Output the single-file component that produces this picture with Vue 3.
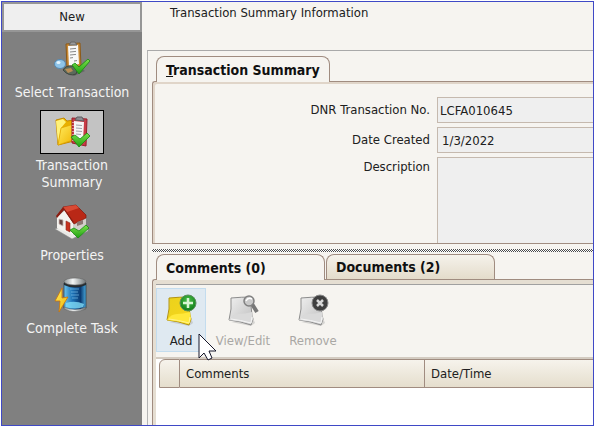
<script setup>
import { ref } from 'vue';

const tasks = [
  { id: 'select', label: 'Select Transaction' },
  { id: 'summary', label: 'Transaction Summary' },
  { id: 'properties', label: 'Properties' },
  { id: 'complete', label: 'Complete Task' },
];
const activeTask = ref('summary');

const tabs = [
  { id: 'comments', label: 'Comments', count: 0 },
  { id: 'documents', label: 'Documents', count: 2 },
];
const activeTab = ref('comments');

const actions = [
  { id: 'add', label: 'Add', enabled: true },
  { id: 'edit', label: 'View/Edit', enabled: false },
  { id: 'remove', label: 'Remove', enabled: false },
];

const transactionNo = ref('LCFA010645');
const dateCreated = ref('1/3/2022');
const description = ref('');
</script>

<template>
  <div class="window">
    <svg class="defs" width="0" height="0" aria-hidden="true">
      <defs>
        <linearGradient id="gold" x1="0" y1="0" x2="1" y2="1">
          <stop offset="0" stop-color="#ffed62" />
          <stop offset="1" stop-color="#f0b400" />
        </linearGradient>
        <linearGradient id="note" x1="0" y1="0" x2="1" y2="1">
          <stop offset="0" stop-color="#ead21c" />
          <stop offset="1" stop-color="#f8d61c" />
        </linearGradient>
        <linearGradient id="silver" x1="0" y1="0" x2="1" y2="1">
          <stop offset="0" stop-color="#f0f0f0" />
          <stop offset="1" stop-color="#bdbdbd" />
        </linearGradient>
        <linearGradient id="green" x1="0" y1="0" x2="0" y2="1">
          <stop offset="0" stop-color="#7be04a" />
          <stop offset="1" stop-color="#1ea012" />
        </linearGradient>
        <linearGradient id="tank" x1="0" y1="0" x2="1" y2="0">
          <stop offset="0" stop-color="#6cc4ee" />
          <stop offset="0.4" stop-color="#1a6fb4" />
          <stop offset="0.75" stop-color="#0a3a72" />
          <stop offset="1" stop-color="#49a9dc" />
        </linearGradient>
        <linearGradient id="metal" x1="0" y1="0" x2="1" y2="0">
          <stop offset="0" stop-color="#8c9294" />
          <stop offset="0.4" stop-color="#f4f6f6" />
          <stop offset="1" stop-color="#6d7375" />
        </linearGradient>
        <radialGradient id="greenBall" cx="0.5" cy="0.35" r="0.6">
          <stop offset="0" stop-color="#4cc04a" />
          <stop offset="1" stop-color="#12801c" />
        </radialGradient>
      </defs>
    </svg>

    <nav class="sidebar">
      <button type="button" class="group">New</button>
      <button
        v-for="task in tasks"
        :key="task.id"
        type="button"
        class="task"
        :class="{ active: task.id === activeTask }"
        @click="activeTask = task.id"
      >
        <span class="task-icon">
          <svg v-if="task.id === 'select'" width="36" height="38" viewBox="0 0 36 38">
            <path d="M10 30l10 6 11-5-8-6z" fill="#555" opacity="0.6" />
            <path d="M12 4l14-1 1 23-14 2z" fill="#c98a35" stroke="#8c5a1a" />
            <path d="M14 6l10-1 1 19-10 2z" fill="#f8f8f8" />
            <path d="M16 9l6-.6M16 12l6-.6M16 15l6-.6M16 18l3-.4M20 21l3-.4" stroke="#888" fill="none" />
            <path d="M15 5l2-3h4l2 3z" fill="#9a9a9a" stroke="#666" />
            <path d="M9 30q3-5 9-4l6 2-2 6q-7 3-13-4z" fill="#5b6a5b" stroke="#404640" />
            <path d="M11 29l6-1 2 3-5 2z" fill="#b98d56" />
            <ellipse cx="6" cy="24" rx="5.5" ry="4.5" fill="#8fc4e8" stroke="#5688b0" />
            <ellipse cx="4.500" cy="22.500" rx="2" ry="1.500" fill="#e2f3fd" />
            <path d="M18 25l3-2 4 4 9-8 2 2-11 13z" fill="url(#green)" stroke="#178c10" stroke-width="0.8" />
          </svg>
          <svg v-else-if="task.id === 'summary'" width="36" height="36" viewBox="0 0 36 36">
            <path d="M2 6l8-2 3 3 7-1v21L4 31z" fill="#e8b000" stroke="#c48a00" />
            <path d="M2 7l7-2 3 3-5 6-3 15z" fill="#fff27a" />
            <path d="M7 14l13-4-1 16L4 31z" fill="url(#gold)" stroke="#e0a400" stroke-width="0.7" />
            <path d="M18 4l15 1-1 27-14-3z" fill="#c93b46" stroke="#96202c" />
            <path d="M20 7l10 1-1 20-9-1z" fill="#f5f5f5" />
            <path d="M22 11l6 .5M22 14l6 .5M22 17l6 .5M22 20l5 .5" stroke="#a0a0a8" fill="none" />
            <path d="M19 8v20" stroke="#fff" stroke-dasharray="1 2" />
            <path d="M21 6l2-3h5l2 4z" fill="#8d8d92" stroke="#5d5d62" />
            <path d="M17 23l4-2 5 4 7-6 3 3-11 11z" fill="url(#green)" stroke="#178c10" stroke-width="0.8" />
          </svg>
          <svg v-else-if="task.id === 'properties'" width="36" height="36" viewBox="0 0 36 36">
            <path d="M1 25l5-2 14 7 14-7v4l-16 8z" fill="#e9e9e6" stroke="#888" stroke-width="0.6" />
            <path d="M3 13l8-7 8 11v14L3 24z" fill="#f4f2ee" />
            <path d="M19 17l13-4v11l-13 7z" fill="#d3cfca" />
            <path d="M9 3l13-2 10 10v3l-12 6z" fill="#b92816" stroke="#7e160c" stroke-width="0.7" />
            <path d="M9 3l13-2 3 3-12 4z" fill="#d94a34" />
            <path d="M9 3L2 12l1 2 7-8 9 13 1-1z" fill="#8c1c10" />
            <path d="M5 15l4 1v6l-4-2z" fill="#6b4440" stroke="#c8bdb7" stroke-width="0.8" />
            <path d="M12 17l4 2v9l-4-2z" fill="#c8321e" stroke="#8f2a1e" stroke-width="0.6" />
            <path d="M23 18l6-2v4l-6 2z" fill="#8f7773" />
            <path d="M16 26l4-2 5 3 7-6 3 3-11 10z" fill="url(#green)" stroke="#178c10" stroke-width="0.8" />
          </svg>
          <svg v-else width="36" height="36" viewBox="0 0 36 36">
            <path d="M10 6v25q11 5 22 0V6z" fill="url(#tank)" stroke="#223746" stroke-width="0.7" />
            <path d="M16 12h9M17 15h7M17 18h8M18 21h6" stroke="#8ccdf0" opacity="0.6" fill="none" />
            <path d="M12 26q9-3 18 1l-1 3q-8 3-17 0z" fill="#7fdcf8" opacity="0.8" />
            <path d="M10 30q11 5 22 0v2q-11 5-22 0z" fill="url(#metal)" stroke="#555" stroke-width="0.4" />
            <path d="M10 5v3q11 5 22 0V5z" fill="#272d31" />
            <ellipse cx="21" cy="4.500" rx="11" ry="3.500" fill="url(#metal)" stroke="#666" stroke-width="0.6" />
            <path d="M8 11L1 24l5 0-1 11 9-15-6 1z" fill="url(#gold)" stroke="#c9730a" stroke-width="0.8" />
          </svg>
        </span>
        <span class="task-label">{{ task.label }}</span>
      </button>
    </nav>

    <main class="content">
      <header class="title">Transaction Summary Information</header>

      <div class="workspace">
        <section class="summary">
          <div class="tabs">
            <button type="button" class="tab selected"><u>T</u>ransaction Summary</button>
          </div>
          <form class="panel form" @submit.prevent>
            <label for="transaction-no">DNR Transaction No.</label>
            <input id="transaction-no" v-model="transactionNo" class="field flush" type="text" readonly />
            <label for="date-created">Date Created</label>
            <input id="date-created" v-model="dateCreated" class="field" type="text" readonly />
            <label for="description" class="top">Description</label>
            <textarea id="description" v-model="description" class="field area" readonly></textarea>
          </form>
        </section>

        <div class="splitter"></div>

        <section class="details">
          <div class="tabs">
            <button
              v-for="tab in tabs"
              :key="tab.id"
              type="button"
              class="tab wide"
              :class="{ selected: tab.id === activeTab }"
              @click="activeTab = tab.id"
            >
              {{ tab.label }} ({{ tab.count }})
            </button>
          </div>
          <div class="panel lower">
            <div class="toolbar">
              <button
                v-for="action in actions"
                :key="action.id"
                type="button"
                class="action"
                :class="action.id"
                :disabled="!action.enabled"
              >
                <svg width="32" height="34" viewBox="0 0 32 34">
                  <path d="M4 29l20 4 4-3-2-5z" fill="#999" opacity="0.35" />
                  <path
                    d="M4 5q10-1 21-1-2 9 0 18l1 4-2 6Q13 28 2 27q3-11 2-22z"
                    :fill="action.enabled ? 'url(#note)' : 'url(#silver)'"
                    :stroke="action.enabled ? '#b39412' : '#8c8c8c'"
                  />
                  <path
                    d="M2 27q4-6 10-6t13-2l1 7-2 5Q13 28 2 27z"
                    :fill="action.enabled ? '#ffe83a' : '#dadada'"
                  />
                  <path
                    d="M4 26q9 1 20 4l1-6"
                    fill="none"
                    :stroke="action.enabled ? '#fff38c' : '#f5f5f5'"
                  />
                  <g v-if="action.id === 'add'">
                    <circle cx="23" cy="10" r="8" fill="url(#greenBall)" stroke="#5c8f5c" />
                    <path d="M23 5v10M18 10h10" stroke="#d8f5d4" stroke-width="2.500" />
                  </g>
                  <g v-else-if="action.id === 'edit'">
                    <path d="M25 11l5 8" stroke="#777" stroke-width="4" />
                    <circle cx="22" cy="8" r="5" fill="#c9c9c9" stroke="#808080" stroke-width="1.500" />
                    <path d="M19 8q2-4 6-2" stroke="#fff" stroke-width="1.500" fill="none" />
                  </g>
                  <g v-else>
                    <circle cx="23" cy="10" r="8" fill="#3f3f3f" stroke="#8a8a8a" />
                    <path d="M20 7l6 6M26 7l-6 6" stroke="#d8d8d8" stroke-width="2.500" />
                  </g>
                </svg>
                <span>{{ action.label }}</span>
              </button>
              <svg class="pointer" width="20" height="28" viewBox="0 0 20 28" aria-hidden="true">
                <path d="M1 1v24l5-5 4 7 4-2-3-7h7z" fill="#fff" stroke="#16162a" />
              </svg>
            </div>
            <div class="grid">
              <table>
                <colgroup>
                  <col class="col-mark" />
                  <col class="col-comments" />
                  <col />
                </colgroup>
                <thead>
                  <tr>
                    <th scope="col"></th>
                    <th scope="col">Comments</th>
                    <th scope="col">Date/Time</th>
                  </tr>
                </thead>
              </table>
            </div>
          </div>
        </section>
      </div>
    </main>
  </div>
</template>

<style>
body {
  margin: 0;
  background: #fff;
}
</style>

<style scoped>
* {
  box-sizing: border-box;
}

.window {
  display: flex;
  min-height: calc(100vh - 1px);
  margin: 1px 0 0 1px;
  border: 1px solid #3f49c6;
  background: #f6f4f0;
  color: #202020;
  font-family: "DejaVu Sans Condensed", "DejaVu Sans", sans-serif;
  font-size: 13px;
  line-height: 16px;
}

.defs {
  position: absolute;
}

button,
input,
textarea {
  font: inherit;
  color: inherit;
}

button {
  margin: 0;
  padding: 0;
  border: 0;
  background: none;
}

.sidebar {
  display: flex;
  flex: none;
  flex-direction: column;
  align-items: center;
  width: 140px;
  background: #808080;
}

.group {
  align-self: stretch;
  height: 30px;
  margin-bottom: 5px;
  border: 2px solid #969696;
  background: #efefef;
}

.task {
  display: flex;
  flex-direction: column;
  align-items: center;
  margin-bottom: 9px;
  color: #f4f4f4;
  font-size: 14px;
  line-height: 17px;
}

.task-icon {
  display: flex;
  align-items: center;
  justify-content: center;
  width: 64px;
  height: 44px;
  margin-bottom: 3px;
  border: 1px solid transparent;
}

.task.active .task-icon {
  border-color: #000;
  background: #c3c3c3;
}

.task-label {
  max-width: 130px;
}

.task.active .task-label {
  max-width: 90px;
}

.content {
  display: flex;
  flex: 1;
  flex-direction: column;
  min-width: 0;
  padding-left: 5px;
}

.title {
  height: 48px;
  padding: 3px 0 0 23px;
}

.workspace {
  display: flex;
  flex: 1;
  flex-direction: column;
  padding: 5px 0 0 4px;
  border-top: 1px solid #a9a9a9;
  border-left: 1px solid #b4b4b4;
}

.tabs {
  display: flex;
  gap: 1px;
  align-items: flex-end;
  padding-left: 4px;
}

.tab {
  height: 25px;
  padding: 0 9px;
  border: 1px solid #a08c80;
  border-bottom: 0;
  border-radius: 8px 8px 0 0;
  background: linear-gradient(#f5f2eb, #e4dccb);
  color: #101010;
  font-size: 14px;
  font-weight: bold;
  text-align: left;
}

.tab.wide {
  width: 169px;
}

.tab.selected {
  position: relative;
  height: 26px;
  margin-bottom: -1px;
  background: #f6f4f0;
}

.panel {
  border: 1px solid #a08c80;
  border-right: 0;
  border-radius: 3px 0 0 0;
}

.form {
  display: grid;
  grid-template-columns: 277px 1fr;
  column-gap: 7px;
  row-gap: 4px;
  align-items: center;
  padding-top: 15px;
  box-shadow: inset 2px 2px 0 #e0d5c9;
}

.form label {
  text-align: right;
}

.form label.top {
  align-self: start;
  padding-top: 2px;
}

.field {
  display: block;
  width: 100%;
  height: 26px;
  padding: 0 4px;
  border: 1px solid #c5b9ae;
  border-right: 0;
  border-radius: 0;
  outline: 0;
  background: #efefef;
}

.field.flush {
  padding-left: 2px;
}

.field.area {
  height: 86px;
  border-bottom: 0;
  resize: none;
}

.splitter {
  height: 3px;
  margin: 5px 0 2px;
  background: repeating-conic-gradient(#4c4c4c 0 25%, #fff 0 50%) 0 0 / 2px 2px;
}

.details {
  display: flex;
  flex: 1;
  flex-direction: column;
}

.lower {
  display: flex;
  flex: 1;
  flex-direction: column;
  padding: 4px 0 0 3px;
  border-bottom: 0;
  box-shadow: inset 3px 4px 0 #e5ded2;
}

.toolbar {
  position: relative;
  display: flex;
  gap: 4px;
  height: 73px;
  padding-top: 3px;
  border-top: 1px solid #a0a0a0;
}

.action {
  display: flex;
  flex-direction: column;
  gap: 6px;
  align-items: center;
  width: 66px;
  height: 64px;
  padding-top: 4px;
  border: 1px solid transparent;
}

.action.add {
  width: 50px;
  border-color: #c3dcee;
  background: #dfe9f1;
}

.action:disabled {
  color: #a9a7a4;
}

.pointer {
  position: absolute;
  top: 48px;
  left: 42px;
}

.grid {
  flex: 1;
  padding-left: 3px;
  border-top: 2px solid #d3cbc1;
  background: #fff;
}

table {
  width: 100%;
  border-collapse: separate;
  border-spacing: 0;
  table-layout: fixed;
}

.col-mark {
  width: 21px;
}

.col-comments {
  width: 245px;
}

th {
  height: 29px;
  padding: 0 6px;
  border: solid #a08c80;
  border-width: 1px 1px 1px 0;
  background: linear-gradient(#f6f3ec, #e5decd);
  font-weight: normal;
  text-align: left;
}

th:first-child {
  border-left-width: 1px;
  border-top-left-radius: 6px;
}

th:last-child {
  border-right: 0;
}
</style>
